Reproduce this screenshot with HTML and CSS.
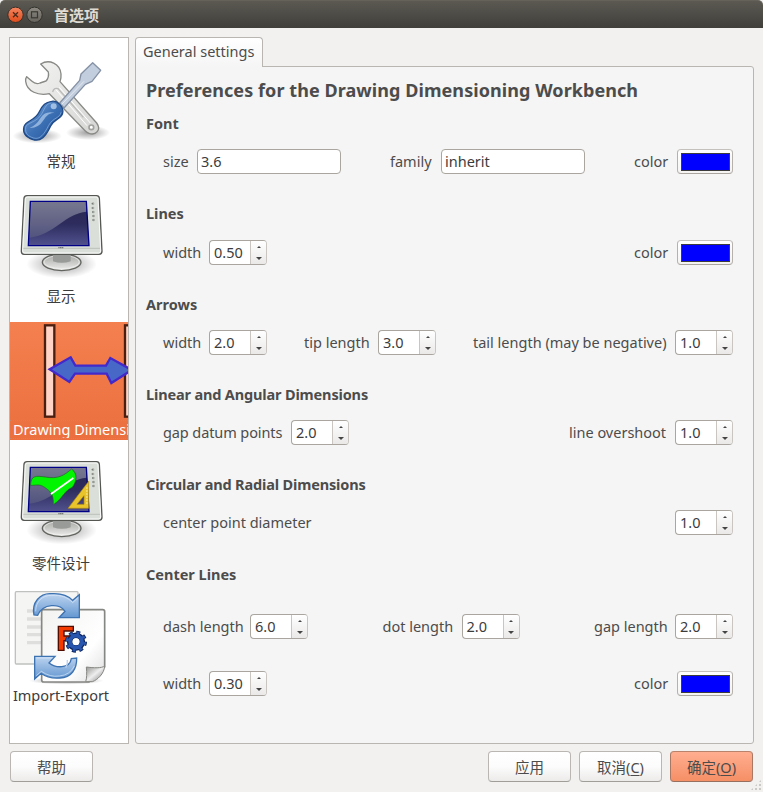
FILE: index.html
```html
<!DOCTYPE html>
<html lang="zh-CN">
<head>
<meta charset="utf-8">
<title>首选项</title>
<link rel="stylesheet" href="styles.css">
</head>
<body>
<div class="window">
  <header class="titlebar">
    <svg class="controls" viewBox="0 0 36 18">
      <defs>
        <linearGradient id="close" x2="0" y2="1"><stop stop-color="#f58560"/><stop offset="1" stop-color="#de4c1b"/></linearGradient>
        <linearGradient id="max" x2="0" y2="1"><stop stop-color="#8c8a82"/><stop offset="1" stop-color="#64625b"/></linearGradient>
      </defs>
      <circle cx="8.500" cy="8.800" r="7.700" fill="url(#close)" stroke="#33312c"/>
      <path d="M6 6.300l5 5M11 6.300l-5 5" stroke="#4c2a1b" stroke-width="1.300"/>
      <circle cx="27.500" cy="8.800" r="7.700" fill="url(#max)" stroke="#33312c"/>
      <rect x="24.500" y="5.800" width="6" height="6" fill="none" stroke="#393832" stroke-width="1.200"/>
    </svg>
    <h1>首选项</h1>
  </header>
  <main>
    <nav class="sidebar">
      <div class="item general">
        <svg viewBox="6 0 354 300">
          <defs>
            <radialGradient id="shade"><stop stop-color="#000" stop-opacity=".38"/><stop offset="1" stop-color="#000" stop-opacity="0"/></radialGradient>
            <linearGradient id="handle" x2="1" y2="1"><stop stop-color="#7fa8dc"/><stop offset=".5" stop-color="#3d71b5"/><stop offset="1" stop-color="#1f4f97"/></linearGradient>
            <linearGradient id="steel" x2="1" y2="1"><stop stop-color="#f4f4f3"/><stop offset="1" stop-color="#d5d6d4"/></linearGradient>
          </defs>
          <ellipse cx="88" cy="258" rx="74" ry="22" fill="url(#shade)"/>
          <ellipse cx="240" cy="248" rx="66" ry="22" fill="url(#shade)"/>
          <path d="M98 42C124 26 156 41 159 72Q160 84 156 95L266 219C281 240 263 257 243 250Q237 248 232 243L124 131C91 138 57 125 53 94Q52 86 56 80L72 94Q83 104 96 99L114 93Q124 82 121 66Z" fill="url(#steel)" stroke="#888a85" stroke-width="4" stroke-linejoin="round"/>
          <path d="M143 118L237 227M154 112L247 219" stroke="#fff" stroke-width="3" fill="none"/>
          <path d="M134 126Q137 112 150 116L226 202" stroke="#b9bab8" stroke-width="4" fill="none"/>
          <circle cx="250" cy="232" r="7" fill="#fff" stroke="#a1a29e" stroke-width="5"/>
          <path d="M254 38L278 61L252 94L232 103L168 174L155 159L215 91L219 72Z" fill="#c2cddd" stroke="#8591a5" stroke-width="4" stroke-linejoin="round"/>
          <path d="M161 163L228 94" stroke="#e5eaf1" stroke-width="3"/>
          <path d="M131 154C148 150 168 171 164 189C160 208 141 204 128 228C113 260 98 276 75 269C52 261 43 249 48 230C53 211 80 214 93 187C104 163 113 157 131 154Z" fill="url(#handle)" stroke="#204a87" stroke-width="4"/>
          <path d="M130 159C116 160 112 171 102 190C88 218 54 218 53 232C51 252 61 259 77 264C96 270 109 252 122 226C135 202 155 206 159 187" fill="none" stroke="#8db4e3" stroke-width="2"/>
          <path d="M140 188Q119 188 107 210Q91 235 65 234Q84 227 97 205Q110 181 140 188Z" fill="#b0cced" opacity=".7"/>
          <circle cx="137" cy="169" r="9" fill="#bfd6f0" opacity=".75"/>
        </svg>
        <span>常规</span>
      </div>
      <div class="item display">
        <svg viewBox="6 0 354 300">
          <defs>
            <linearGradient id="screen" x2="0" y2="1"><stop stop-color="#28284f"/><stop offset=".5" stop-color="#2d2c5d"/><stop offset="1" stop-color="#51518e"/></linearGradient>
            <linearGradient id="glare" x2="0" y2="1"><stop stop-color="#77788f"/><stop offset="1" stop-color="#53547f"/></linearGradient>
            <linearGradient id="base" x2="0" y2="1"><stop stop-color="#a4a6a2"/><stop offset="1" stop-color="#eeeeec"/></linearGradient>
            <g id="monitor">
              <ellipse cx="161" cy="237" rx="106" ry="43" fill="url(#shade)"/>
              <ellipse cx="161" cy="232" rx="58" ry="25" fill="url(#base)" stroke="#62645f" stroke-width="4"/>
              <ellipse cx="161" cy="231" rx="53" ry="20" fill="none" stroke="#f3f4f2" stroke-width="2"/>
              <path d="M135 207H188V229Q161 238 135 229Z" fill="#989b97"/>
              <path d="M57 32H266Q273 32 274 39L282 199Q282 208 273 208H48Q40 208 40 199L48 39Q49 32 57 32Z" fill="#dadfd9" stroke="#555753" stroke-width="4"/>
              <path d="M59 36H264Q270 36 270 42L278 198Q278 204 271 204H51Q44 204 44 198L52 42Q53 36 59 36Z" fill="none" stroke="#fafafa" stroke-width="3"/>
              <path d="M46 190H276" stroke="#aeb1ac" stroke-width="2"/>
              <path d="M67 49H235L243 182H61Z" fill="url(#screen)"/>
              <path d="M67 49H235V49L243 182H61Z" fill="url(#screen)"/>
              <path d="M67 49H234L236 80C172 84 140 150 63 158Z" fill="url(#glare)"/>
              <path d="M67 49H235L243 182H61Z" fill="none" stroke="#000086" stroke-width="4"/>
              <path d="M151 188H167" stroke="#777a76" stroke-width="4" stroke-dasharray="4 1"/>
              <g fill="#aaada8"><circle cx="255" cy="56" r="4"/><circle cx="255" cy="69" r="4"/><circle cx="256" cy="81" r="4"/><circle cx="257" cy="93" r="4"/><circle cx="257" cy="105" r="4"/></g>
              <path d="M251 56h4M251 69h4M252 81h4M253 93h4M253 105h4" stroke="#70736f" stroke-width="3"/>
            </g>
          </defs>
          <use href="#monitor"/>
        </svg>
        <span>显示</span>
      </div>
      <div class="item dimensioning selected">
        <svg viewBox="6 12 354 294">
          <rect x="111" y="22" width="28" height="274" fill="#ffd4c6" stroke="#4b1e10" stroke-width="7"/>
          <rect x="351" y="22" width="28" height="274" fill="#ffd4c6" stroke="#4b1e10" stroke-width="7"/>
          <path d="M125 154L188 118L202 143H294L307 120L371 156L310 195L296 167H201L184 192Z" fill="#4868c8" stroke="#4328cc" stroke-width="7"/>
        </svg>
        <span>Drawing Dimensioning</span>
      </div>
      <div class="item part">
        <svg viewBox="6 0 354 306">
          <use href="#monitor" y="3"/>
          <path d="M68 106C68 76 84 77 112 81C151 88 168 76 191 57C210 72 206 93 193 112C168 122 165 145 136 164C137 133 130 125 107 110C91 101 83 107 68 106Z" fill="#00f600" stroke="#245d29" stroke-width="2"/>
          <path d="M129 132L196 84" stroke="#fff" stroke-width="5"/>
          <path d="M242 94V175H180ZM228 137L207 163H228Z" fill="#e9c52b" fill-rule="evenodd" stroke="#a48510" stroke-width="2"/>
          <path d="M234 114h5m-5 9h5m-5 9h5m-5 9h5m-5 9h5m-5 9h5" stroke="#fff0a3" stroke-width="3"/>
        </svg>
        <span>零件设计</span>
      </div>
      <div class="item import">
        <svg viewBox="6 0 354 300">
          <defs>
            <linearGradient id="paper" x2="1" y2="1"><stop stop-color="#f2f3f1"/><stop offset=".65" stop-color="#fff"/><stop offset="1" stop-color="#ddd"/></linearGradient>
            <linearGradient id="arrow" x2="0" y2="1"><stop stop-color="#bdd4ef"/><stop offset="1" stop-color="#6497d1"/></linearGradient>
            <linearGradient id="curl" x2="1" y2="1"><stop stop-color="#8d8f8b"/><stop offset=".5" stop-color="#eee"/><stop offset="1" stop-color="#777"/></linearGradient>
          </defs>
          <rect x="22" y="20" width="188" height="217" rx="3" fill="#f5f5f4" stroke="#bfc1be" stroke-width="4"/>
          <path d="M57 78H180M57 102H180M57 126H180M57 149H180M57 173H180" stroke="#dededd" stroke-width="10"/>
          <ellipse cx="175" cy="287" rx="112" ry="12" fill="url(#shade)"/>
          <path d="M106 74H284Q290 74 290 80V246L243 291H107Q101 291 101 285V80Q101 74 106 74Z" fill="url(#paper)" stroke="#858782" stroke-width="5"/>
          <path d="M290 243C281 250 257 249 235 246Q238 275 233 290H253C268 285 289 266 290 243Z" fill="url(#curl)" stroke="#858782" stroke-width="3"/>
          <path d="M151 124H196V138H168V153H190V167H168V196H151Z" fill="#f53a00" stroke="#500d00" stroke-width="4"/>
          <circle cx="204" cy="170" r="27" fill="none" stroke="#0c235c" stroke-width="12" stroke-dasharray="11.200 10"/>
          <circle cx="204" cy="170" r="19" fill="none" stroke="#0c235c" stroke-width="17"/>
          <circle cx="204" cy="170" r="26" fill="none" stroke="#2856af" stroke-width="9" stroke-dasharray="8 12.400" stroke-dashoffset="-1.500"/>
          <circle cx="204" cy="170" r="18" fill="none" stroke="#2856af" stroke-width="11"/>
          <circle cx="204" cy="170" r="10" fill="#fff"/>
          <path d="M78 90C70 53 96 24 129 26C161 24 181 32 194 46L214 29V98H153L171 79C156 55 105 54 89 91Z" fill="url(#arrow)" stroke="#3e73b2" stroke-width="4"/>
          <path d="M83 79C83 49 103 31 131 31C160 29 180 38 194 53L209 39" fill="none" stroke="#deebfa" stroke-width="2"/>
          <path d="M206 219C207 252 190 278 156 279Q122 282 99 265L80 282V214H141L123 234C142 249 185 253 190 221Z" fill="url(#arrow)" stroke="#3e73b2" stroke-width="4"/>
          <path d="M85 219H133M85 272L100 259Q126 277 154 273Q186 270 199 243" fill="none" stroke="#deebfa" stroke-width="2"/>
          <path d="M178 225Q180 237 173 248" stroke="#bad2ef" stroke-width="4" fill="none"/>
        </svg>
        <span>Import-Export</span>
      </div>
    </nav>
    <section class="tabs">
      <div class="tab">General settings</div>
      <div class="panel">
        <h2>Preferences for the Drawing Dimensioning Workbench</h2>
        <h3 class="first">Font</h3>
        <div class="row">
          <div class="field"><label class="w-size">size</label><div class="input">3.6</div></div>
          <div class="field"><label class="w-family">family</label><div class="input">inherit</div></div>
          <div class="field"><label class="w-color">color</label><div class="swatch"><i></i></div></div>
        </div>
        <h3>Lines</h3>
        <div class="row lines">
          <div class="field"><label class="w-width">width</label><div class="spin"><span>0.50</span><b></b></div></div>
          <div class="field"><label class="w-color">color</label><div class="swatch"><i></i></div></div>
        </div>
        <h3>Arrows</h3>
        <div class="row">
          <div class="field"><label class="w-width">width</label><div class="spin"><span>2.0</span><b></b></div></div>
          <div class="field"><label class="w-tip">tip length</label><div class="spin"><span>3.0</span><b></b></div></div>
          <div class="field"><label class="w-tail">tail length (may be negative)</label><div class="spin"><span>1.0</span><b></b></div></div>
        </div>
        <h3 class="long">Linear and Angular Dimensions</h3>
        <div class="row">
          <div class="field"><label class="w-datum">gap datum points</label><div class="spin"><span>2.0</span><b></b></div></div>
          <div class="field"><label class="w-over">line overshoot</label><div class="spin"><span>1.0</span><b></b></div></div>
        </div>
        <h3 class="long">Circular and Radial Dimensions</h3>
        <div class="row">
          <label>center point diameter</label>
          <div class="spin"><span>1.0</span><b></b></div>
        </div>
        <h3>Center Lines</h3>
        <div class="row dashes">
          <div class="field"><label class="w-dash">dash length</label><div class="spin"><span>6.0</span><b></b></div></div>
          <div class="field"><label class="w-dot">dot length</label><div class="spin"><span>2.0</span><b></b></div></div>
          <div class="field"><label class="w-gap">gap length</label><div class="spin"><span>2.0</span><b></b></div></div>
        </div>
        <div class="row last">
          <div class="field"><label class="w-width">width</label><div class="spin"><span>0.30</span><b></b></div></div>
          <div class="field"><label class="w-color">color</label><div class="swatch"><i></i></div></div>
        </div>
      </div>
    </section>
  </main>
  <footer>
    <button class="help">帮助</button>
    <button>应用</button>
    <button>取消(<u>C</u>)</button>
    <button class="ok">确定(<u>O</u>)</button>
  </footer>
  <div class="grip"></div>
</div>
</body>
</html>
```
FILE: styles.css
```css
* { box-sizing: border-box; }
body {
  margin: 0;
  background: #f2f1f0;
  color: #4c4c4c;
  font: 14.5px/20px "Noto Sans", "Noto Sans CJK SC", sans-serif;
  overflow: hidden;
}
.window { position: relative; width: 763px; height: 792px; }
.titlebar {
  height: 28px;
  display: flex;
  align-items: center;
  padding-left: 7px;
  background: linear-gradient(#5b5952, #403f3a);
  border-top: 1px solid #656359;
  border-radius: 5px 5px 0 0;
}
.controls { width: 36px; height: 18px; }
h1 { margin: 0 0 0 11px; font-size: 15px; line-height: 20px; color: #dfdbd2; }
main { display: flex; gap: 6px; padding: 9px 9px 0; height: 716px; }
.sidebar {
  width: 120px;
  height: 707px;
  padding-top: 12px;
  background: #fff;
  border: 1px solid #bab7b3;
  overflow: hidden;
  color: #3c3c3c;
}
.item svg { display: block; width: 118px; height: 100px; }
.item span { display: block; width: 102px; height: 22px; line-height: 22px; text-align: center; white-space: nowrap; }
.general { margin-bottom: 13px; }
.display { margin-bottom: 15px; }
.selected { height: 118px; margin-bottom: 10px; background: linear-gradient(#f5804f, #eb6f3f); color: #fff; }
.selected svg { height: 98px; }
.item.selected span { width: 118px; height: 19px; line-height: 16px; text-align: left; padding-left: 3px; border: 1px dotted #c98466; border-width: 1px 0; overflow: hidden; }
.part { margin-bottom: 11px; }
.part svg { height: 102px; }
.import span { line-height: 20px; text-align: left; padding-left: 3px; letter-spacing: -0.05px; }
.tabs { flex: 1; }
.tab {
  position: relative;
  width: 128px;
  height: 30px;
  padding-left: 7px;
  line-height: 27px;
  border: 1px solid #b9b6b2;
  border-bottom: 0;
  border-radius: 4px 4px 0 0;
  background: linear-gradient(#fff, #f5f5f5);
  white-space: nowrap;
}
.panel {
  height: 678px;
  margin-top: -1px;
  padding: 13px 20px 0 10px;
  border: 1px solid #b9b6b2;
  border-radius: 0 3px 3px 3px;
  background: #f5f5f5;
}
h2, h3 { margin: 0; line-height: 20px; white-space: nowrap; }
h2 { font-size: 18px; letter-spacing: 0.07px; }
h3 { height: 20px; margin-top: 30px; font-size: 14.5px; line-height: 18px; }
h3.first { margin-top: 14px; }
h3.long { letter-spacing: -0.15px; }
.row { display: flex; justify-content: space-between; align-items: center; height: 25px; margin: 15px 0 0 17px; }
.row.lines { margin-top: 16px; }
.row.dashes { margin-top: 29px; }
.row.last { margin-top: 32px; }
.field { display: flex; align-items: center; }
label { padding-bottom: 2px; white-space: nowrap; }
.w-size { width: 34px; }
.w-family { width: 51px; }
.w-color { width: 43px; }
.w-width { width: 46px; }
.w-tip { width: 74px; }
.w-tail { width: 202px; }
.w-datum { width: 128px; letter-spacing: -0.1px; }
.w-over { width: 106px; }
.w-dash { width: 87px; }
.w-dot { width: 79px; }
.w-gap { width: 81px; }
.input, .spin, .swatch { height: 25px; border: 1px solid #aaa69f; border-radius: 4px; background: #fff; color: #3c3c3c; }
.input { width: 144px; padding-left: 3px; line-height: 23px; }
.spin { display: flex; width: 58px; border-right-color: #c9c6c2; overflow: hidden; }
.spin span { width: 40px; padding-left: 4px; line-height: 23px; }
.spin b {
  display: flex;
  flex-direction: column;
  align-items: center;
  justify-content: space-between;
  width: 16px;
  padding: 5px 0 4px;
  border-left: 1px solid #c9c6c2;
  background: linear-gradient(#fff, #ebe9e8);
}
.spin b::before, .spin b::after { content: ""; border: 3px solid transparent; }
.spin b::before { border-width: 0 2.5px 2px; border-bottom-color: #444; }
.spin b::after { border-bottom: 0; border-top: 3px solid #444; }
.swatch { width: 56px; padding: 3px 2px 2px 3px; border-color: #c4c1bd #b5b1ac #aaa69f; background: linear-gradient(#fff, #f5f4f3); }
.swatch i { display: block; width: 49px; height: 18px; background: #00f; border: 1px solid #3c3c3c; }
footer { display: flex; gap: 8px; padding: 7px 10px 0; }
button {
  width: 83px;
  height: 31px;
  padding: 0;
  border: 1px solid #bab7b3;
  border-bottom-color: #a19e99;
  border-radius: 4px;
  background: linear-gradient(#fff, #fcfcfc 50%, #edebea);
  color: #4c4c4c;
  font: inherit;
}
.help { margin-right: auto; }
.ok { background: linear-gradient(#ffae90, #f58f66); border-color: #b9826b #a97864 #98705f; }
u { text-underline-offset: 2px; }
.grip {
  position: absolute;
  right: 1px;
  bottom: 1px;
  width: 12px;
  height: 12px;
  background: radial-gradient(circle, #cbc9c6 0.8px, transparent 1.2px) 0 0 / 4px 4px;
  clip-path: polygon(100% 0, 100% 100%, 0 100%);
}
```
